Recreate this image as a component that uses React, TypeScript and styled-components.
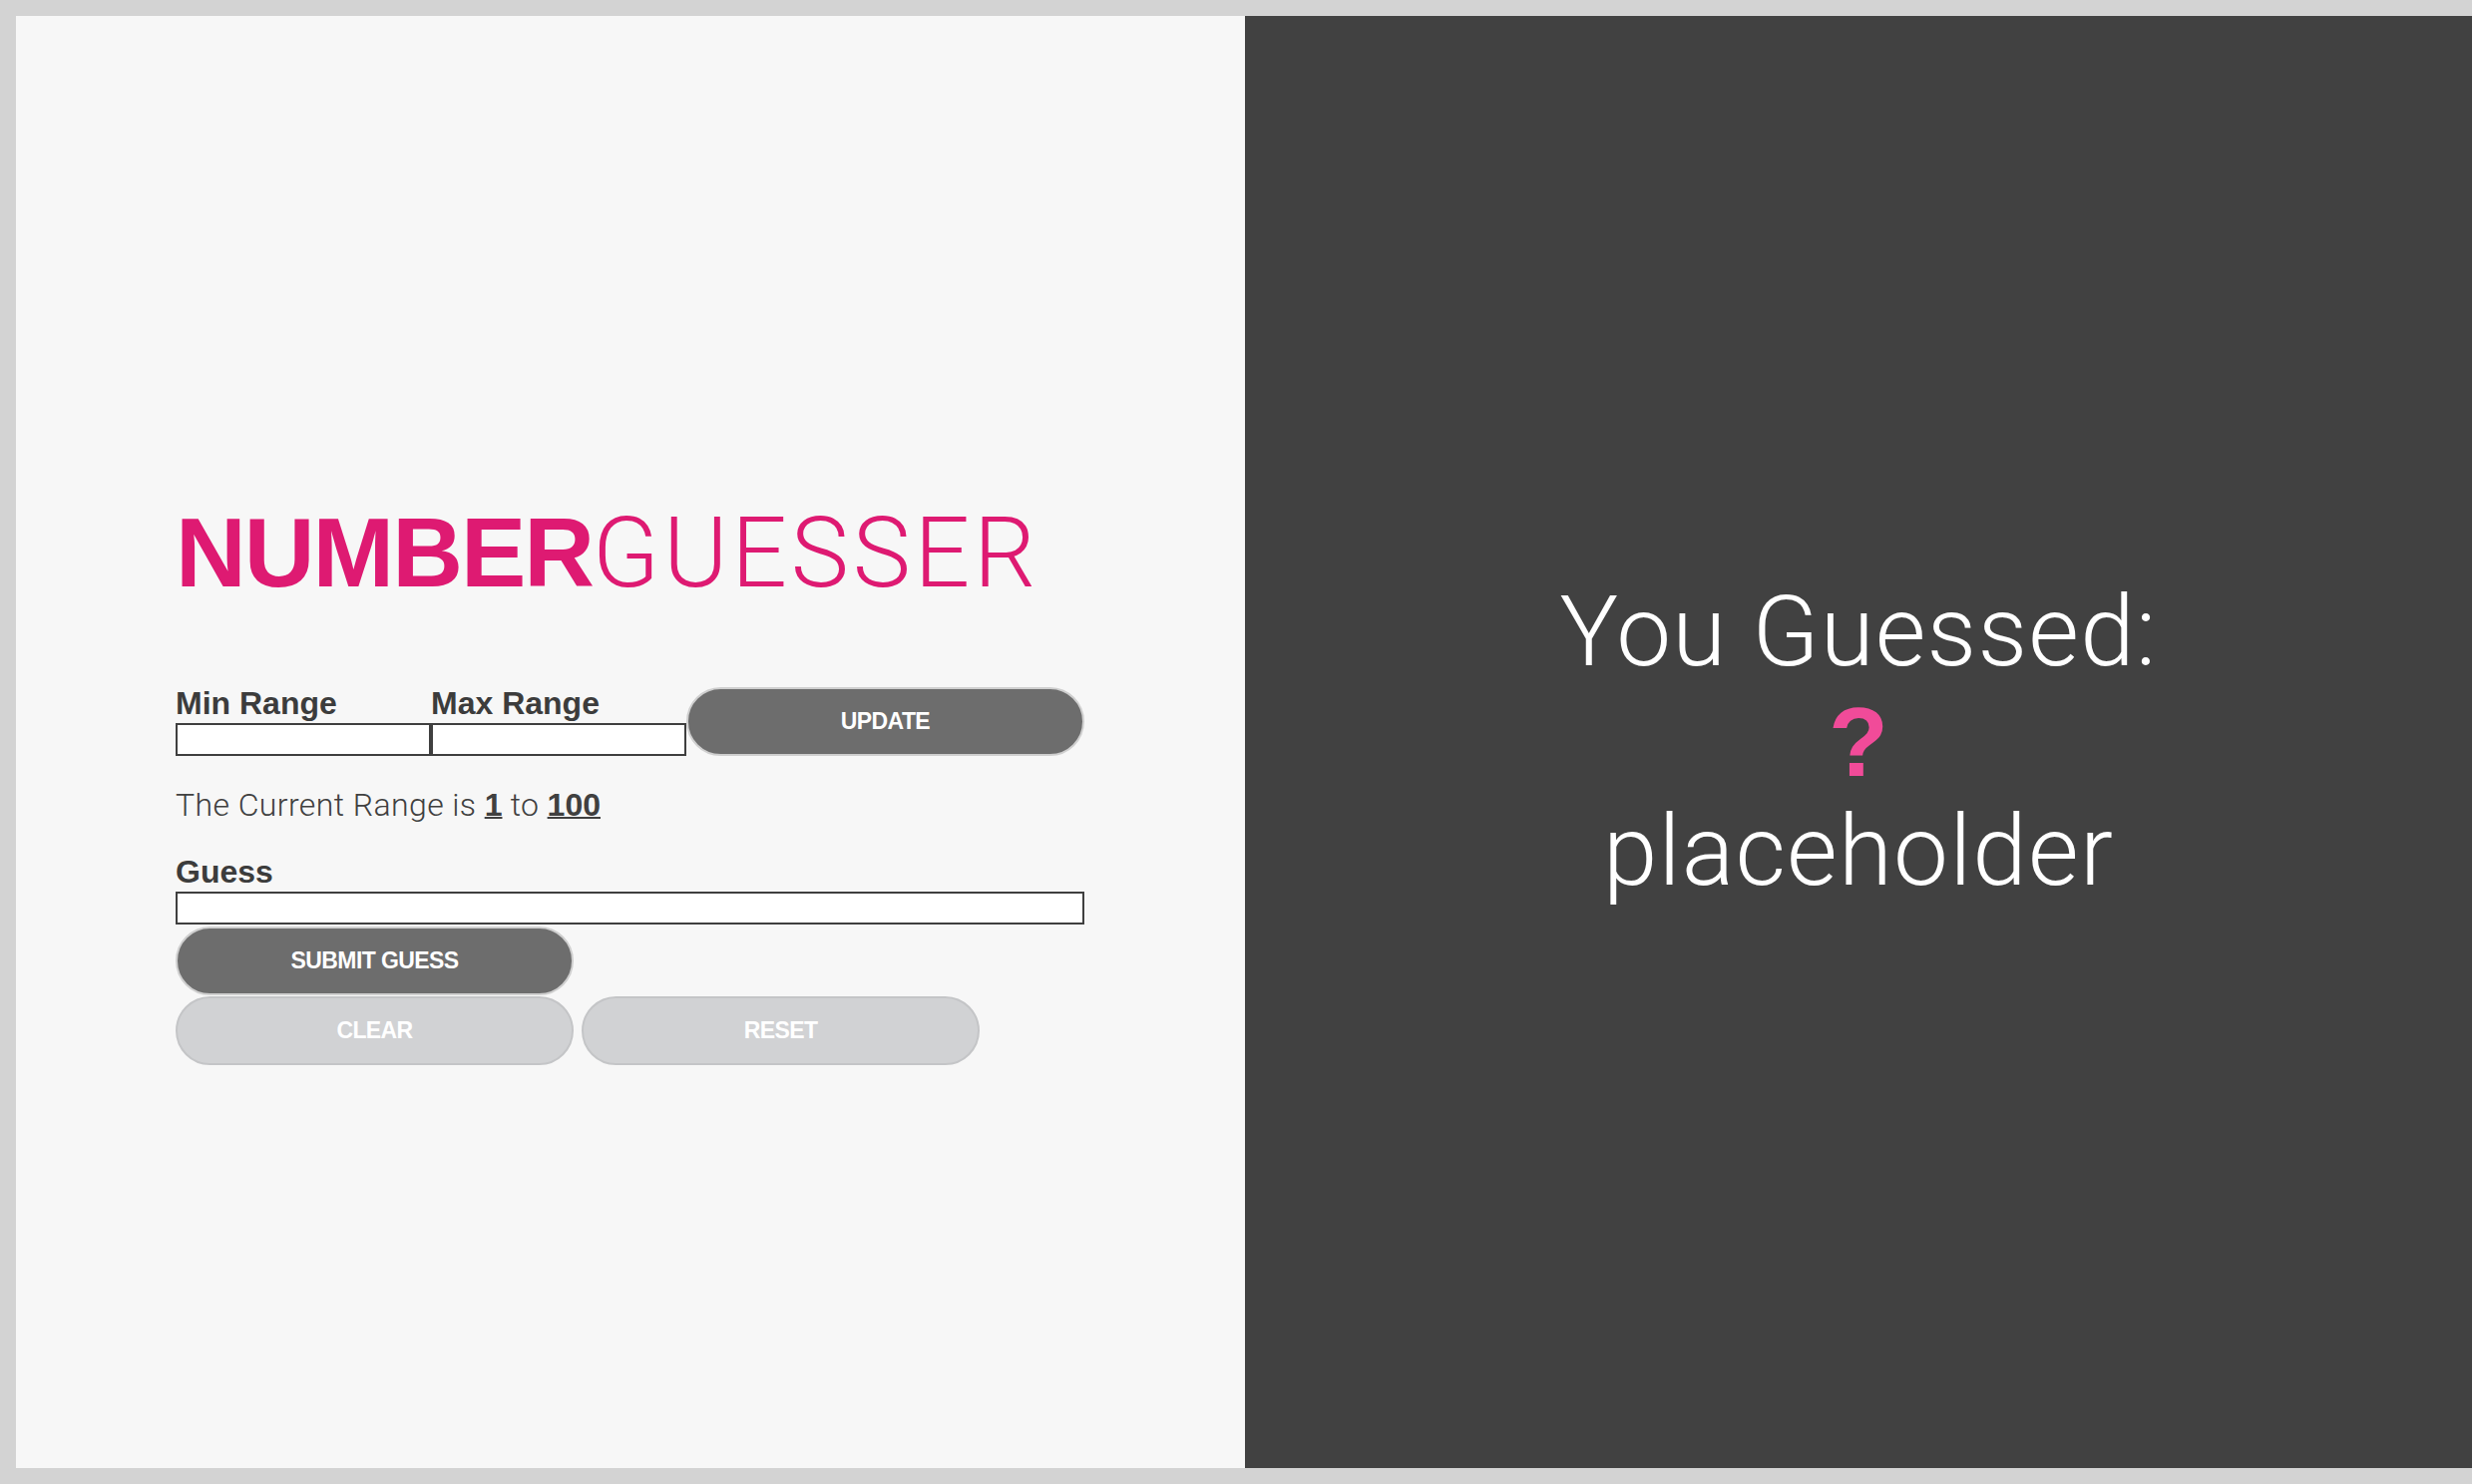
import React from "react";
import styled, { createGlobalStyle } from "styled-components";

const GlobalStyle = createGlobalStyle`
  html, body {
    margin: 0;
    padding: 0;
    background: #d3d3d3;
  }
  * { box-sizing: border-box; }
`;

const Page = styled.div`
  display: flex;
  height: 1488px;
  padding: 16px 0 16px 16px;
  font-family: "Liberation Sans", Arial, sans-serif;
`;

const LeftPanel = styled.section`
  flex: 0 0 1232px;
  min-width: 0;
  background: #f7f7f7;
  padding: 489px 0 0 160px;
  color: #3d3d3d;
`;

const RightPanel = styled.section`
  flex: 1 1 0;
  min-width: 0;
  background: #414141;
  display: flex;
  flex-direction: column;
  align-items: center;
  justify-content: center;
  text-align: center;
`;

const Title = styled.h1`
  margin: 0;
  font-size: 98px;
  line-height: 98px;
  color: #de1a72;
  white-space: nowrap;
`;

const TitleBold = styled.span`
  font-family: "Liberation Sans", Arial, sans-serif;
  font-weight: 700;
  letter-spacing: -2px;
`;

const TitleLight = styled.span`
  font-family: Roboto, "Liberation Sans", sans-serif;
  font-weight: 300;
  letter-spacing: 3.8px;
`;

const Form = styled.div`
  width: 911px;
`;

const RangeRow = styled.div`
  display: flex;
  align-items: flex-end;
  margin-top: 84px;
`;

const Field = styled.label<{ $width: string }>`
  display: flex;
  flex-direction: column;
  width: ${(p) => p.$width};
`;

const Label = styled.span`
  display: block;
  font-size: 32px;
  line-height: 35px;
  font-weight: 700;
  color: #3c3c3c;
  margin-bottom: 2px;
`;

const Input = styled.input`
  display: block;
  width: 100%;
  height: 33px;
  margin: 0;
  border: 2px solid #3f3f3f;
  border-radius: 0;
  background: #ffffff;
  outline: none;
`;

const Button = styled.button<{ $disabled?: boolean }>`
  display: flex;
  align-items: center;
  justify-content: center;
  width: 399px;
  height: 69px;
  padding: 0;
  border-radius: 35px;
  border: 2px solid ${(p) => (p.$disabled ? "#c4c5c7" : "#cfcfcf")};
  background: ${(p) => (p.$disabled ? "#d1d2d4" : "#6d6d6d")};
  color: #ffffff;
  font-family: "Liberation Sans", Arial, sans-serif;
  font-weight: 700;
  font-size: 23px;
  letter-spacing: -0.6px;
  text-transform: uppercase;
  cursor: pointer;
`;

const RangeText = styled.p`
  margin: 31px 0 0;
  font-family: Roboto, "Liberation Sans", sans-serif;
  font-weight: 300;
  font-size: 32px;
  line-height: 36px;
  letter-spacing: 0.4px;
  color: #404040;
`;

const RangeNumber = styled.span`
  font-family: "Liberation Sans", Arial, sans-serif;
  font-weight: 700;
  letter-spacing: 0;
  text-decoration: underline;
  text-decoration-thickness: 2px;
`;

const GuessField = styled.label`
  display: flex;
  flex-direction: column;
  margin-top: 32px;
`;

const SubmitWrap = styled.div`
  margin-top: 2px;
`;

const ButtonRow = styled.div`
  display: flex;
  gap: 8px;
  margin-top: 1px;
`;

const BigLine = styled.div`
  font-family: Roboto, "Liberation Sans", sans-serif;
  font-size: 98px;
  line-height: 110px;
  font-weight: 300;
  letter-spacing: 1.2px;
  color: #ffffff;
`;

const Mark = styled.div`
  font-family: "Liberation Sans", Arial, sans-serif;
  font-size: 98px;
  line-height: 110px;
  font-weight: 700;
  color: #f14b99;
`;

export default function App() {
  return (
    <>
      <GlobalStyle />
      <Page>
        <LeftPanel>
          <Title>
            <TitleBold>NUMBER</TitleBold>
            <TitleLight>GUESSER</TitleLight>
          </Title>
          <Form>
            <RangeRow>
              <Field $width="256px">
                <Label>Min Range</Label>
                <Input type="text" />
              </Field>
              <Field $width="256px">
                <Label>Max Range</Label>
                <Input type="text" />
              </Field>
              <Button>Update</Button>
            </RangeRow>
            <RangeText>
              The Current Range is <RangeNumber>1</RangeNumber> to{" "}
              <RangeNumber>100</RangeNumber>
            </RangeText>
            <GuessField>
              <Label>Guess</Label>
              <Input type="text" />
            </GuessField>
            <SubmitWrap>
              <Button>Submit Guess</Button>
            </SubmitWrap>
            <ButtonRow>
              <Button $disabled>Clear</Button>
              <Button $disabled>Reset</Button>
            </ButtonRow>
          </Form>
        </LeftPanel>
        <RightPanel>
          <BigLine>You Guessed:</BigLine>
          <Mark>?</Mark>
          <BigLine>placeholder</BigLine>
        </RightPanel>
      </Page>
    </>
  );
}
